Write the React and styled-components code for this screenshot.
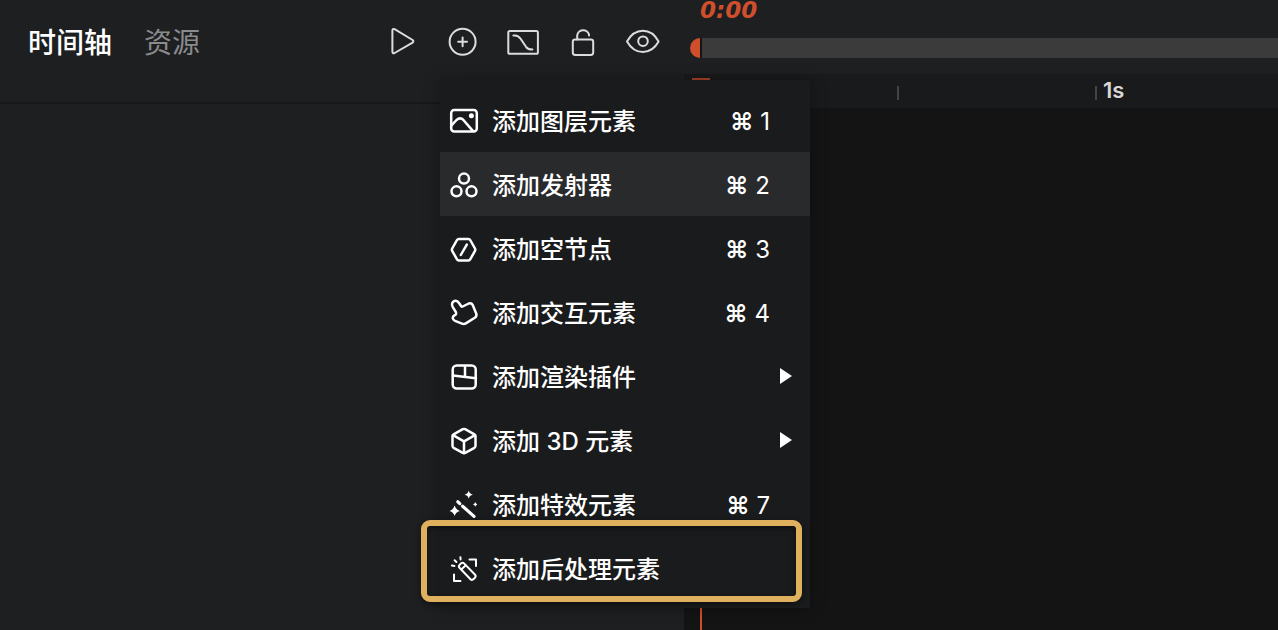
import React from "react"
import styled, { createGlobalStyle } from "styled-components"

const LayerIcon = () => (
  <MenuSvg viewBox="0 0 28 28">
    <rect x="1.2" y="4" width="25.6" height="21.4" rx="3" />
    <path d="M1.5 19.3 L6.5 14 Q10.3 10.6 13.6 14.2 L22.6 24.6" />
    <circle className="solid" cx="21.4" cy="9.8" r="2.5" />
  </MenuSvg>
)

const EmitterIcon = () => (
  <MenuSvg viewBox="0 0 28 28">
    <circle cx="14" cy="8.6" r="5" />
    <circle cx="6.5" cy="21.3" r="5" />
    <circle cx="21.5" cy="21.3" r="5" />
  </MenuSvg>
)

const NullIcon = () => (
  <MenuSvg viewBox="0 0 28 28">
    <path d="M8.9 4.9 H18.3 Q19.6 4.9 20.2 6 L25 14.5 Q25.6 15.7 25 16.8 L20.2 25.4 Q19.6 26.5 18.3 26.5 H8.9 Q7.6 26.5 7 25.4 L2.2 16.8 Q1.6 15.7 2.2 14.5 L7 6 Q7.6 4.9 8.9 4.9 Z" />
    <path d="M16.8 10.6 L10.8 21" />
  </MenuSvg>
)

const InteractIcon = () => (
  <MenuSvg viewBox="0 0 28 28">
    <path d="M2.8 9.2 C1 6 2.4 3.6 4.6 3 C6.6 2.5 8 3.4 9 5 L11.2 8.2 Q11.8 9 12.7 8.5 L18.8 5.5 Q21.4 4.6 22.6 6.8 L26.2 15.4 Q27.2 18.2 24.8 19.8 L15.8 25.4 Q14 26.4 12 25.6 L5 22.8 C2.2 21.4 2 18.8 4.4 17.4 Q7 16.2 5.8 14 Z" />
  </MenuSvg>
)

const PluginIcon = () => (
  <MenuSvg viewBox="0 0 28 28">
    <rect x="2.7" y="3.5" width="23" height="23" rx="4" />
    <path d="M3 13.6 L26 16.2" />
    <path d="M15 4 V14.8" />
  </MenuSvg>
)

const CubeIcon = () => (
  <MenuSvg viewBox="0 0 28 28">
    <path d="M12.8 3.2 Q14 2.6 15.2 3.2 L24.4 8.3 Q25.5 9 25.5 10.3 V19.8 Q25.5 21.2 24.4 21.8 L15.2 26.9 Q14 27.5 12.8 26.9 L3.6 21.8 Q2.5 21.2 2.5 19.8 V10.3 Q2.5 9 3.6 8.3 Z" />
    <path d="M3 9.2 L14 15.4 L25 9.2" />
    <path d="M14 15.4 V27" />
  </MenuSvg>
)

const EffectIcon = () => (
  <MenuSvg viewBox="0 0 28 28">
    <path
      className="solid"
      d="M18.7 0.6 Q19.4 4 22.8 4.7 Q19.4 5.4 18.7 8.8 Q18 5.4 14.6 4.7 Q18 4 18.7 0.6 Z"
    />
    <path
      className="solid"
      d="M4.6 15.6 Q5.8 19.8 9.8 20.9 Q5.8 22 4.6 26 Q3.4 22 -0.4 20.9 Q3.4 19.8 4.6 15.6 Z"
    />
    <path
      className="solid"
      d="M25.3 12 Q25.8 14 27.4 14.4 Q25.8 14.8 25.3 16.8 Q24.8 14.8 23 14.4 Q24.8 14 25.3 12 Z"
    />
    <path className="thick" d="M7.8 11.8 L9.8 13.6" />
    <path className="thick" d="M12.6 16.2 L24 26.4" />
  </MenuSvg>
)

const PostIcon = () => (
  <MenuSvg viewBox="0 0 28 28">
    <g strokeWidth="2">
      <path d="M19.5 5.5 H26 V12" />
      <path d="M4 20.5 V27 H10.5" />
      <rect
        x="7.4"
        y="13.8"
        width="20"
        height="6.4"
        rx="2.4"
        transform="rotate(46 17 17)"
      />
      <path d="M15.6 11.4 L11.2 15.4" />
      <path d="M1.9 11.6 L4.4 11.9" />
      <path d="M4.6 6.2 L6.4 8" />
      <path d="M10.4 3.2 L10.6 5.4" />
    </g>
  </MenuSvg>
)

const tools = [
  {
    name: "播放",
    icon: (
      <path d="M8.4 6.6 Q8.4 4.2 10.6 5.2 L28.6 16 Q30.2 17.3 28.6 18.6 L10.6 29 Q8.4 30 8.4 27.6 Z" />
    ),
  },
  {
    name: "添加",
    menu: true,
    icon: (
      <>
        <circle cx="18.6" cy="17.8" r="13" />
        <path d="M14.2 17.8 H23 M18.6 13.4 V22.2" />
      </>
    ),
  },
  {
    name: "曲线",
    icon: (
      <>
        <rect x="4.3" y="7" width="29.6" height="22.8" rx="1.6" />
        <path d="M9.4 11.4 H11 Q14.4 11.4 16.6 14.8 L22 22.8 Q24 25.6 28.4 25.6" />
      </>
    ),
  },
  {
    name: "锁定",
    icon: (
      <>
        <rect x="8.8" y="15.4" width="20.4" height="15.6" rx="2.4" />
        <path d="M13.2 15.4 V11.6 A6 5.8 0 0 1 25 10.6 L25 11.6" />
      </>
    ),
  },
  {
    name: "显示",
    icon: (
      <>
        <path d="M3 17.5 Q9 6.8 18.9 6.8 Q28.8 6.8 34.6 17.5 Q28.8 28 18.9 28 Q9 28 3 17.5 Z" />
        <circle cx="19" cy="17.2" r="4.8" />
      </>
    ),
  },
]

const items = [
  { label: "添加图层元素", digit: "1", Icon: LayerIcon },
  { label: "添加发射器", digit: "2", Icon: EmitterIcon, active: true },
  { label: "添加空节点", digit: "3", Icon: NullIcon },
  { label: "添加交互元素", digit: "4", Icon: InteractIcon },
  { label: "添加渲染插件", submenu: true, Icon: PluginIcon },
  { label: "添加 3D 元素", submenu: true, Icon: CubeIcon },
  { label: "添加特效元素", digit: "7", Icon: EffectIcon },
  { label: "添加后处理元素", Icon: PostIcon, marked: true },
]

const AddMenu = () => (
  <Menu role="menu">
    {items.map(({ label, digit, submenu, Icon, active, marked }) => (
      <MenuItem key={label} role="menuitem" $active={active}>
        <Icon />
        <Label>{label}</Label>
        {digit && (
          <Keys>
            <b>⌘</b> {digit}
          </Keys>
        )}
        {submenu && <Arrow />}
        {marked && <Marker />}
      </MenuItem>
    ))}
  </Menu>
)

const App = () => {
  return (
    <Page>
      <GlobalStyle />
      <Sidebar>
        <Header>
          <Tabs>
            <Tab $active>时间轴</Tab>
            <Tab>资源</Tab>
          </Tabs>
          <Toolbar>
            {tools.map(({ name, icon, menu }) => (
              <ToolSlot key={name}>
                <ToolButton aria-label={name}>
                  <ToolSvg viewBox="0 0 36 36">{icon}</ToolSvg>
                </ToolButton>
                {menu && <AddMenu />}
              </ToolSlot>
            ))}
          </Toolbar>
        </Header>
      </Sidebar>
      <Timeline>
        <Time>0:00</Time>
        <Scrubber>
          <Handle />
          <Range />
        </Scrubber>
        <Ruler>
          <Tick />
          <Tick $visible />
          <Tick $visible>1s</Tick>
        </Ruler>
        <Tracks />
        <Playhead />
      </Timeline>
    </Page>
  )
}

export default App

const GlobalStyle = createGlobalStyle`
  * {
    box-sizing: border-box;
  }
  body {
    margin: 0;
    background: #1e1f21;
    font-family: Inter, "Noto Sans CJK SC", sans-serif;
  }
  button {
    padding: 0;
    border: 0;
    background: none;
    color: inherit;
    font: inherit;
    cursor: pointer;
  }
`

const Page = styled.div`
  display: grid;
  grid-template-columns: 684px 1fr;
  height: 100vh;
  overflow: hidden;
`

const Sidebar = styled.aside`
  background: #1e1f21;
`

const Header = styled.header`
  display: flex;
  justify-content: space-between;
  padding: 20px 20px 38px 28px;
  border-bottom: 2px solid #17181a;
`

const Tabs = styled.nav`
  display: flex;
  gap: 32px;
`

const Tab = styled.button`
  padding-top: 2px;
  font-size: 28px;
  font-weight: ${({ $active }) => ($active ? 500 : 400)};
  line-height: 42px;
  color: ${({ $active }) => ($active ? "#ffffff" : "#8a8b8c")};
`

const Toolbar = styled.div`
  display: flex;
  gap: 16px;
`

const ToolSlot = styled.div`
  position: relative;
`

const ToolButton = styled.button`
  display: flex;
  align-items: center;
  justify-content: center;
  width: 44px;
  height: 44px;
`

const ToolSvg = styled.svg`
  width: 36px;
  height: 36px;
  fill: none;
  stroke: #dcdcdc;
  stroke-width: 2;
  stroke-linecap: round;
  stroke-linejoin: round;
`

const Menu = styled.div`
  position: absolute;
  top: 60px;
  left: 0;
  z-index: 10;
  width: 370px;
  padding: 8px 0;
  background: #1a1b1c;
  box-shadow: 0 0 16px rgba(0, 0, 0, 0.3);
`

const MenuItem = styled.button`
  position: relative;
  display: flex;
  align-items: center;
  gap: 14px;
  width: 100%;
  height: 64px;
  padding: 0 40px 0 10px;
  background: ${({ $active }) => ($active ? "#292a2c" : "transparent")};
  color: #ffffff;
  font-size: 24px;
  line-height: 32px;
  text-align: left;
`

const MenuSvg = styled.svg`
  flex: none;
  width: 28px;
  height: 28px;
  overflow: visible;
  fill: none;
  stroke: #ffffff;
  stroke-width: 2.5;
  stroke-linecap: round;
  stroke-linejoin: round;
  .solid {
    fill: #ffffff;
    stroke: none;
  }
  .thick {
    stroke-width: 3.2;
  }
`

const Label = styled.span`
  flex: 1;
  padding-top: 4px;
  font-weight: 500;
  white-space: nowrap;
`

const Keys = styled.span`
  padding-top: 4px;
  white-space: nowrap;
  b {
    font-weight: 600;
  }
`

const Arrow = styled.span`
  margin-right: -22px;
  border-left: 12px solid #ffffff;
  border-top: 8px solid transparent;
  border-bottom: 8px solid transparent;
`

const Marker = styled.span`
  position: absolute;
  top: -16px;
  right: 8px;
  bottom: -2px;
  left: -19px;
  border: 6px solid #dfb15e;
  border-radius: 9px;
  box-shadow: 0 2px 6px rgba(0, 0, 0, 0.5),
    inset 0 2px 6px rgba(0, 0, 0, 0.5);
  pointer-events: none;
`

const Timeline = styled.main`
  position: relative;
  display: flex;
  flex-direction: column;
  min-width: 0;
  background: #1e1f21;
`

const Time = styled.div`
  padding-left: 16px;
  color: #cf4f2d;
  font-family: "DejaVu Sans", sans-serif;
  font-size: 23px;
  font-style: italic;
  font-weight: 700;
  line-height: 20px;
`

const Scrubber = styled.div`
  display: flex;
  height: 20px;
  margin: 18px 0 16px;
  padding-left: 6px;
`

const Handle = styled.div`
  width: 12px;
  border-right: 2px solid #141415;
  background: #cf4f2d;
  border-radius: 10px 0 0 10px;
`

const Range = styled.div`
  flex: 1;
  background: #3b3b3b;
`

const Ruler = styled.div`
  display: flex;
  flex: none;
  height: 34px;
  padding: 12px 0 8px 15px;
  background: #191a1b;
`

const Tick = styled.div`
  flex: none;
  width: 198px;
  padding-left: 6px;
  border-left: 2px solid ${({ $visible }) => ($visible ? "#434445" : "transparent")};
  color: #d8d8d8;
  font-size: 22px;
  font-weight: 600;
  line-height: 8px;
`

const Tracks = styled.div`
  flex: 1;
  background: #141415;
`

const Playhead = styled.div`
  position: absolute;
  top: 78px;
  bottom: 0;
  left: 8px;
  width: 18px;
  border-top: 2px solid #a8402a;
  background: linear-gradient(#cf4f2d, #cf4f2d) 8px 0 / 2px 100% no-repeat;
`
